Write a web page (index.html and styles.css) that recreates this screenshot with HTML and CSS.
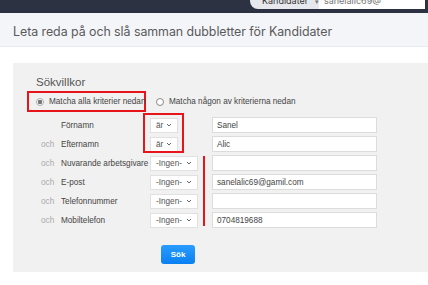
FILE: index.html
```html
<!DOCTYPE html>
<html lang="sv">

<head>
    <meta charset="UTF-8">
    <meta name="viewport" content="width=device-width, initial-scale=1.0">
    <title>Dubbletter</title>
    <link rel="stylesheet" href="styles.css">
</head>

<body>
    <div class="topbar">
        <div class="search">
            <span class="scope">Kandidater <span class="scope-caret">▾</span></span>
            <span class="query">sanelalic69@</span>
        </div>
    </div>

    <div class="page-head">
        <h1>Leta reda på och slå samman dubbletter för Kandidater</h1>
    </div>

    <main class="content">
        <section class="panel">
            <h2 class="legend">Sökvillkor</h2>

            <div class="match-row">
                <label class="match-option marked">
                    <span class="radio checked"></span>
                    Matcha alla kriterier nedan
                </label>
                <label class="match-option">
                    <span class="radio"></span>
                    Matcha någon av kriterierna nedan
                </label>
            </div>

            <div class="criteria">
                <span class="och"></span>
                <span class="field-label">Förnamn</span>
                <div class="select short">är<svg viewBox="0 0 6 4"><path d="M1 1l2 2 2-2" /></svg></div>
                <div class="text-input">Sanel</div>

                <span class="och">och</span>
                <span class="field-label">Efternamn</span>
                <div class="select short">är<svg viewBox="0 0 6 4"><path d="M1 1l2 2 2-2" /></svg></div>
                <div class="text-input">Alic</div>

                <span class="och">och</span>
                <span class="field-label">Nuvarande arbetsgivare</span>
                <div class="select">-Ingen-<svg viewBox="0 0 6 4"><path d="M1 1l2 2 2-2" /></svg></div>
                <div class="text-input"></div>

                <span class="och">och</span>
                <span class="field-label">E-post</span>
                <div class="select">-Ingen-<svg viewBox="0 0 6 4"><path d="M1 1l2 2 2-2" /></svg></div>
                <div class="text-input">sanelalic69@gamil.com</div>

                <span class="och">och</span>
                <span class="field-label">Telefonnummer</span>
                <div class="select">-Ingen-<svg viewBox="0 0 6 4"><path d="M1 1l2 2 2-2" /></svg></div>
                <div class="text-input"></div>

                <span class="och">och</span>
                <span class="field-label">Mobiltelefon</span>
                <div class="select">-Ingen-<svg viewBox="0 0 6 4"><path d="M1 1l2 2 2-2" /></svg></div>
                <div class="text-input">0704819688</div>

                <!-- annotations drawn over the form -->
                <div class="mark-box"></div>
                <div class="mark-line"></div>
            </div>

            <button class="btn-search">Sök</button>
        </section>
    </main>
</body>

</html>
```

FILE: styles.css
```css
* {
    margin: 0;
    padding: 0;
    box-sizing: border-box;
}

body {
    background: #fff;
    font-family: "Liberation Sans", Arial, sans-serif;
    color: #444;
    overflow: hidden;
}

/* top navigation strip */
.topbar {
    height: 13px;
    background: #2c3241;
    display: flex;
    justify-content: flex-end;
    align-items: flex-end;
    padding: 0 3px 4px 0;
    overflow: hidden;
}

.search {
    display: flex;
    height: 18px;
    font-family: Inter, sans-serif;
    font-size: 9px;
}

.scope {
    width: 69px;
    background: #e6e8ee;
    color: #333;
    border-radius: 0 0 0 8px;
    padding: 4px 0 0 12px;
}

.scope-caret {
    font-size: 7px;
    color: #777;
    margin-left: 4px;
}

.query {
    width: 106px;
    background: #fff;
    color: #777;
    padding: 4px 0 0 5px;
}

/* title */
.page-head {
    height: 34px;
    background: #f4f5f9;
    border-bottom: 1px solid #e8eaef;
    padding: 11px 0 0 13px;
}

h1 {
    font-family: Inter, sans-serif;
    font-weight: 400;
    font-size: 12.4px;
    line-height: 16px;
    color: #5a5a5a;
    letter-spacing: -0.05px;
}

.content {
    padding: 16px 0 0 13px;
}

.panel {
    background: #f1f1f1;
    height: 209px;
    padding: 12px 0 0 23px;
}

.legend {
    font-weight: 400;
    font-size: 11.5px;
    line-height: 14px;
    color: #555;
}

.match-row {
    display: flex;
    align-items: center;
    gap: 10px;
    margin: 2px 0 0 -9px;
}

.match-option {
    display: flex;
    align-items: center;
    gap: 5px;
    height: 21px;
    font-size: 8.2px;
    color: #444;
    white-space: nowrap;
}

.match-option.marked {
    width: 119px;
    padding: 0 0 0 7px;
    border: 2px solid #e8141b;
}

.radio {
    flex: none;
    width: 8px;
    height: 8px;
    border-radius: 50%;
    border: 1px solid #888;
    background: #fff;
}

.radio.checked {
    background: radial-gradient(circle, #777 0 2px, #fff 2.5px);
    border-color: #aaa;
}

/* criteria grid */
.criteria {
    position: relative;
    display: grid;
    grid-template-columns: 20px 89px 62px 165px;
    grid-auto-rows: 16px;
    row-gap: 3px;
    align-items: center;
    margin: 5px 0 0 5px;
    font-size: 8.2px;
}

.och {
    color: #aaa;
}

.field-label {
    color: #444;
    white-space: nowrap;
}

.select {
    width: 48px;
    height: 15px;
    background: #fff;
    border: 1px solid #e0e0e0;
    color: #555;
    display: flex;
    align-items: center;
    justify-content: space-between;
    padding: 0 5px;
}

.select.short {
    width: 28px;
}

.select svg {
    width: 6px;
    height: 4px;
    fill: none;
    stroke: #666;
    stroke-width: 1;
}

.text-input {
    height: 16px;
    background: #fff;
    border: 1px solid #dcdcdc;
    color: #444;
    padding: 3px 0 0 4px;
    line-height: 9px;
}

.mark-box {
    position: absolute;
    left: 102px;
    top: -4px;
    width: 41px;
    height: 40px;
    border: 2px solid #e8141b;
}

.mark-line {
    position: absolute;
    left: 162px;
    top: 39px;
    width: 2px;
    height: 70px;
    background: #e8141b;
}

.btn-search {
    margin: 17px 0 0 125px;
    width: 34px;
    height: 19px;
    border: none;
    border-radius: 3px;
    background: linear-gradient(#2a9cff, #0a7ff2);
    color: #fff;
    font-family: "Liberation Sans", Arial, sans-serif;
    font-weight: 700;
    font-size: 8px;
}
```
